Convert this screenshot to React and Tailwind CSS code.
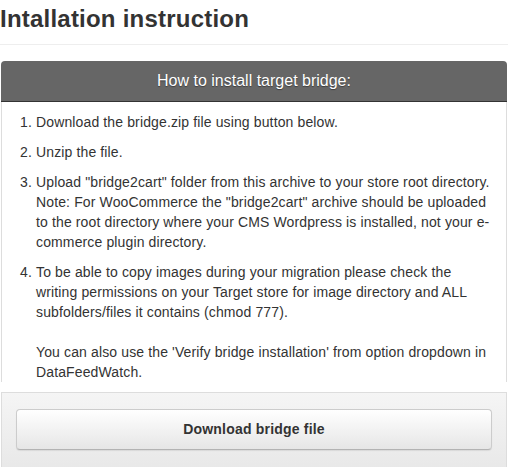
// Bridge installation instructions panel
const steps = [
  'Download the bridge.zip file using button below.',
  'Unzip the file.',
  'Upload "bridge2cart" folder from this archive to your store root directory. Note: For WooCommerce the "bridge2cart" archive should be uploaded to the root directory where your CMS Wordpress is installed, not your e-commerce plugin directory.',
];

const App = () => (
  <div className="w-[508px] h-[467px] overflow-hidden bg-white text-[#333] font-['Liberation_Sans',Arial,sans-serif]">
    <div className="h-[45px] border-b border-[#eee] pt-[6px]">
      <h2 className="text-[24px] leading-[26px] font-bold tracking-[0.22px]">Intallation instruction</h2>
    </div>
    <div className="mx-[1px] mt-[16px]">
      <div className="h-[41px] rounded-t-[4px] bg-[#666] border-b border-[#333] flex items-center justify-center">
        <span className="text-[16px] text-white [text-shadow:0_1px_1px_rgba(0,0,0,0.4)]">How to install target bridge:</span>
      </div>
      <div className="h-[280px] overflow-hidden border-x border-[#ddd] pt-[10px] pl-[34px] pr-[10px]">
        <ol className="list-decimal text-[14px] leading-[20px] tracking-[0.13px]">
          {steps.map((s) => (
            <li key={s} className="mb-[10px]">{s}</li>
          ))}
          <li className="mb-[10px]">
            To be able to copy images during your migration please check the writing permissions on your Target store for image directory and ALL subfolders/files it contains (chmod 777).
            <br />
            <br />
            You can also use the 'Verify bridge installation' from option dropdown in DataFeedWatch.
          </li>
        </ol>
      </div>
      <div className="mt-[10px] h-[80px] border border-[#ddd] bg-gradient-to-b from-[#f5f5f5] to-[#e8e8e8] px-[14px] pt-[16px]">
        <button className="w-full h-[41px] rounded-[4px] border border-[#ccc] border-b-[#b3b3b3] bg-gradient-to-b from-white to-[#e6e6e6] shadow-[0_1px_1px_rgba(0,0,0,0.08)] text-[14px] font-bold text-[#333] tracking-[0.2px]">
          Download bridge file
        </button>
      </div>
    </div>
  </div>
);

export default App;
